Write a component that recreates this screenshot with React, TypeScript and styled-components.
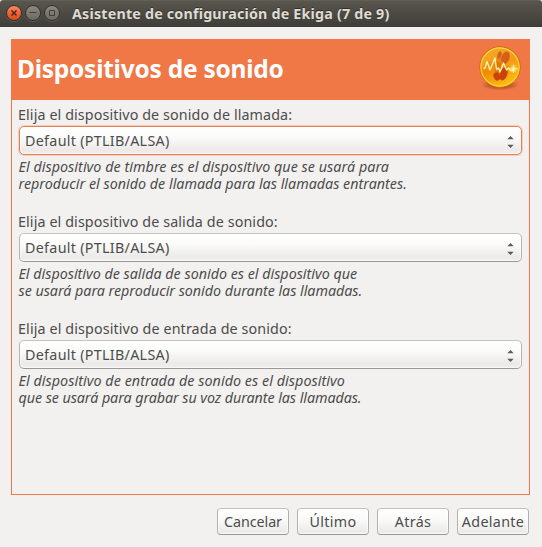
import React from "react";
import styled, { createGlobalStyle, css } from "styled-components";

const GlobalStyle = createGlobalStyle`
  * { box-sizing: border-box; }
  html, body { margin: 0; padding: 0; background: #fff; }
`;

const Window = styled.div`
  display: flex;
  flex-direction: column;
  width: 542px;
  height: 547px;
  overflow: hidden;
  background: #f2f1ef;
  color: #4c4c4c;
  font: 14.3px/17px "Noto Sans", "Open Sans", sans-serif;
  border-radius: 3px 3px 0 0;
`;

const TitleBar = styled.header`
  display: flex;
  align-items: center;
  flex: none;
  height: 27px;
  padding-left: 6px;
  background: linear-gradient(#6b675c 0, #59564e 1px, #55524b 5px, #403e39 26px, #3b3a35);
`;

const WindowControls = styled.div`
  display: flex;
  gap: 3px;
  height: 17px;
`;

const ControlButton = styled.button<{ $close?: boolean }>`
  display: block;
  width: 16px;
  height: 16px;
  padding: 0;
  border: 1px solid #34322e;
  border-radius: 50%;
  background: ${(p) => (p.$close ? "linear-gradient(#f58b66, #ee6337 50%, #dd4a1b)" : "linear-gradient(#8a8880, #6c6a63)")};
  box-shadow: 0 1px 0 rgba(255, 255, 255, 0.12);
  svg { display: block; }
`;

const Text = styled.span<{ $spacing: number }>`
  letter-spacing: ${(p) => p.$spacing}px;
  white-space: nowrap;
`;

const WindowTitle = styled(Text)`
  margin-left: 12px;
  color: #dfdbd2;
  font-weight: 700;
  text-shadow: 0 -1px 0 rgba(30, 28, 24, 0.6);
`;

const Page = styled.main`
  display: flex;
  flex-direction: column;
  flex: none;
  width: 519px;
  height: 456px;
  margin: 12px 0 0 11px;
  border: 1px solid #f07746;
`;

const PageHeader = styled.div`
  display: flex;
  align-items: flex-start;
  justify-content: space-between;
  height: 60px;
  padding: 3px 7px 0 5px;
  background: #f07746;
`;

const Heading = styled.h1`
  margin: 11px 0 0;
  color: #fff;
  font-size: 24.5px;
  font-weight: 700;
  line-height: 30px;
  letter-spacing: -0.25px;
`;

const Fields = styled.div`
  display: flex;
  flex-direction: column;
  gap: 21px;
  padding: 6px 7px 0 6px;
`;

const Field = styled.section`
  display: flex;
  flex-direction: column;
  height: 86px;
`;

const Combo = styled.button<{ $focused?: boolean }>`
  display: flex;
  align-items: center;
  justify-content: space-between;
  flex: none;
  height: 29px;
  margin: 3px 0 3px 1px;
  padding: 0 7px 0 5px;
  border: 1px solid;
  border-color: #c6c4c1 #b5b3b0 #9b9996;
  border-radius: 5px;
  background: linear-gradient(#fff, #fafaf9 40%, #ebeae8 85%, #f0efed);
  box-shadow: inset 0 0 0 1px rgba(255, 255, 255, 0.55);
  color: inherit;
  font: inherit;
  svg { margin-top: 2px; }
  ${(p) =>
    p.$focused &&
    css`
      border-color: #ec7e55;
      box-shadow: 0 0 0 1px rgba(240, 119, 70, 0.28), inset 0 0 0 1px rgba(255, 255, 255, 0.55);
    `}
`;

const Hint = styled.p`
  display: flex;
  flex-direction: column;
  margin: 0 0 0 0.5px;
  font-style: italic;
`;

const Actions = styled.footer`
  display: flex;
  justify-content: flex-end;
  gap: 8px;
  padding: 13px 13px 0 0;
`;

const ActionButton = styled.button`
  display: flex;
  align-items: center;
  justify-content: center;
  width: 72px;
  height: 27px;
  padding: 0;
  border: 1px solid;
  border-color: #c3c1be #b3b1ae #999794;
  border-radius: 4px;
  background: linear-gradient(#fff, #f9f9f8 45%, #ebeae8 90%, #f0efed);
  box-shadow: inset 0 0 0 1px rgba(255, 255, 255, 0.55);
  color: inherit;
  font: inherit;
`;

const StepperArrows = () => (
  <svg width="7" height="12" viewBox="0 0 7 12" fill="#5a5a5a">
    <path d="M.3 3.200 3.500 0l3.200 3.200zM.3 8.800h6.400L3.500 12z" />
  </svg>
);

const SoundCoin = () => (
  <svg width="44" height="50" viewBox="0 0 44 50">
    <defs>
      <linearGradient id="coin" x1="0.2" y1="0" x2="0.7" y2="1">
        <stop offset="0" stopColor="#f3a01c" />
        <stop offset="0.5" stopColor="#f08c06" />
        <stop offset="1" stopColor="#ffc414" />
      </linearGradient>
      <radialGradient id="shade">
        <stop offset="0.5" stopColor="#8f3c18" stopOpacity="0.55" />
        <stop offset="1" stopColor="#8f3c18" stopOpacity="0" />
      </radialGradient>
      <radialGradient id="spark">
        <stop offset="0" stopColor="#fffbd0" />
        <stop offset="1" stopColor="#ffe04a" stopOpacity="0" />
      </radialGradient>
    </defs>
    <ellipse cx="22" cy="42" rx="19" ry="5.500" fill="url(#shade)" />
    <circle cx="22" cy="24" r="20.200" fill="url(#coin)" stroke="#cf6a0a" />
    <circle cx="22" cy="24" r="19.100" fill="none" stroke="#ffd23a" strokeWidth="1.200" />
    <path d="M21 12c-4 5-5.500 14-3 20l5-1c-1-6 0-12 2-16z" fill="#e27405" />
    <g fill="#cb400b">
      <ellipse cx="27.500" cy="14.800" rx="4" ry="6.600" transform="rotate(18 27.500 14.800)" />
      <ellipse cx="21.500" cy="12" rx="2" ry="3.800" transform="rotate(18 21.500 12)" />
      <ellipse cx="25.500" cy="31" rx="3.800" ry="6.600" transform="rotate(18 25.500 31)" />
      <ellipse cx="18.800" cy="33.500" rx="3.200" ry="4.200" transform="rotate(-25 18.800 33.500)" />
    </g>
    <path d="M3 25Q10 14 22 19.500T41 22A19 19 0 0 0 3 25z" fill="#ffd860" opacity="0.2" />
    <path
      d="m5.500 25.500 1.500-.5 2-6.500 3 8.500 5-12 1.500 11.500 2-1.500 1.500 4 3.500-9 3 7 2-2 2 2.500h4"
      fill="none"
      stroke="#fff0ae"
      strokeWidth="1.400"
      strokeLinejoin="round"
    />
    <circle cx="35.500" cy="25.800" r="5" fill="url(#spark)" />
    <path d="M35.500 21.500v8.600M31.200 25.800h8.600" stroke="#fff4a0" strokeWidth="0.700" />
  </svg>
);

type Line = { text: string; spacing: number };
const devices: { label: Line; hint: Line[]; focused?: boolean }[] = [
  {
    label: { text: "Elija el dispositivo de sonido de llamada:", spacing: 0.105 },
    hint: [
      { text: "El dispositivo de timbre es el dispositivo que se usará para", spacing: 0.05 },
      { text: "reproducir el sonido de llamada para las llamadas entrantes.", spacing: 0.006 },
    ],
    focused: true,
  },
  {
    label: { text: "Elija el dispositivo de salida de sonido:", spacing: 0.11 },
    hint: [
      { text: "El dispositivo de salida de sonido es el dispositivo que", spacing: -0.002 },
      { text: "se usará para reproducir sonido durante las llamadas.", spacing: -0.028 },
    ],
  },
  {
    label: { text: "Elija el dispositivo de entrada de sonido:", spacing: 0.12 },
    hint: [
      { text: "El dispositivo de entrada de sonido es el dispositivo", spacing: 0.058 },
      { text: "que se usará para grabar su voz durante las llamadas.", spacing: -0.065 },
    ],
  },
];

const actions: Line[] = [
  { text: "Cancelar", spacing: -0.075 },
  { text: "Último", spacing: 0.33 },
  { text: "Atrás", spacing: 0.39 },
  { text: "Adelante", spacing: 0.33 },
];

export default function App() {
  return (
    <>
      <GlobalStyle />
      <Window>
        <TitleBar>
          <WindowControls>
            <ControlButton $close aria-label="Cerrar">
              <svg width="14" height="14" stroke="#4b2418" strokeWidth="1.400">
                <path d="m4.500 4.500 5 5m0-5-5 5" />
              </svg>
            </ControlButton>
            <ControlButton aria-label="Minimizar">
              <svg width="14" height="14" stroke="#403e39">
                <path d="M3.500 6.500h7" />
              </svg>
            </ControlButton>
            <ControlButton aria-label="Maximizar">
              <svg width="14" height="14" fill="none" stroke="#403e39">
                <path d="M4.500 4.500h5v5h-5z" />
              </svg>
            </ControlButton>
          </WindowControls>
          <WindowTitle $spacing={0.19}>Asistente de configuración de Ekiga (7 de 9)</WindowTitle>
        </TitleBar>
        <Page>
          <PageHeader>
            <Heading>Dispositivos de sonido</Heading>
            <SoundCoin />
          </PageHeader>
          <Fields>
            {devices.map(({ label, hint, focused }) => (
              <Field key={label.text}>
                <Text $spacing={label.spacing}>{label.text}</Text>
                <Combo $focused={focused}>
                  <Text $spacing={0.3}>Default (PTLIB/ALSA)</Text>
                  <StepperArrows />
                </Combo>
                <Hint>
                  {hint.map((line) => (
                    <Text key={line.text} $spacing={line.spacing}>
                      {line.text}
                    </Text>
                  ))}
                </Hint>
              </Field>
            ))}
          </Fields>
        </Page>
        <Actions>
          {actions.map((action) => (
            <ActionButton key={action.text}>
              <Text $spacing={action.spacing}>{action.text}</Text>
            </ActionButton>
          ))}
        </Actions>
      </Window>
    </>
  );
}
